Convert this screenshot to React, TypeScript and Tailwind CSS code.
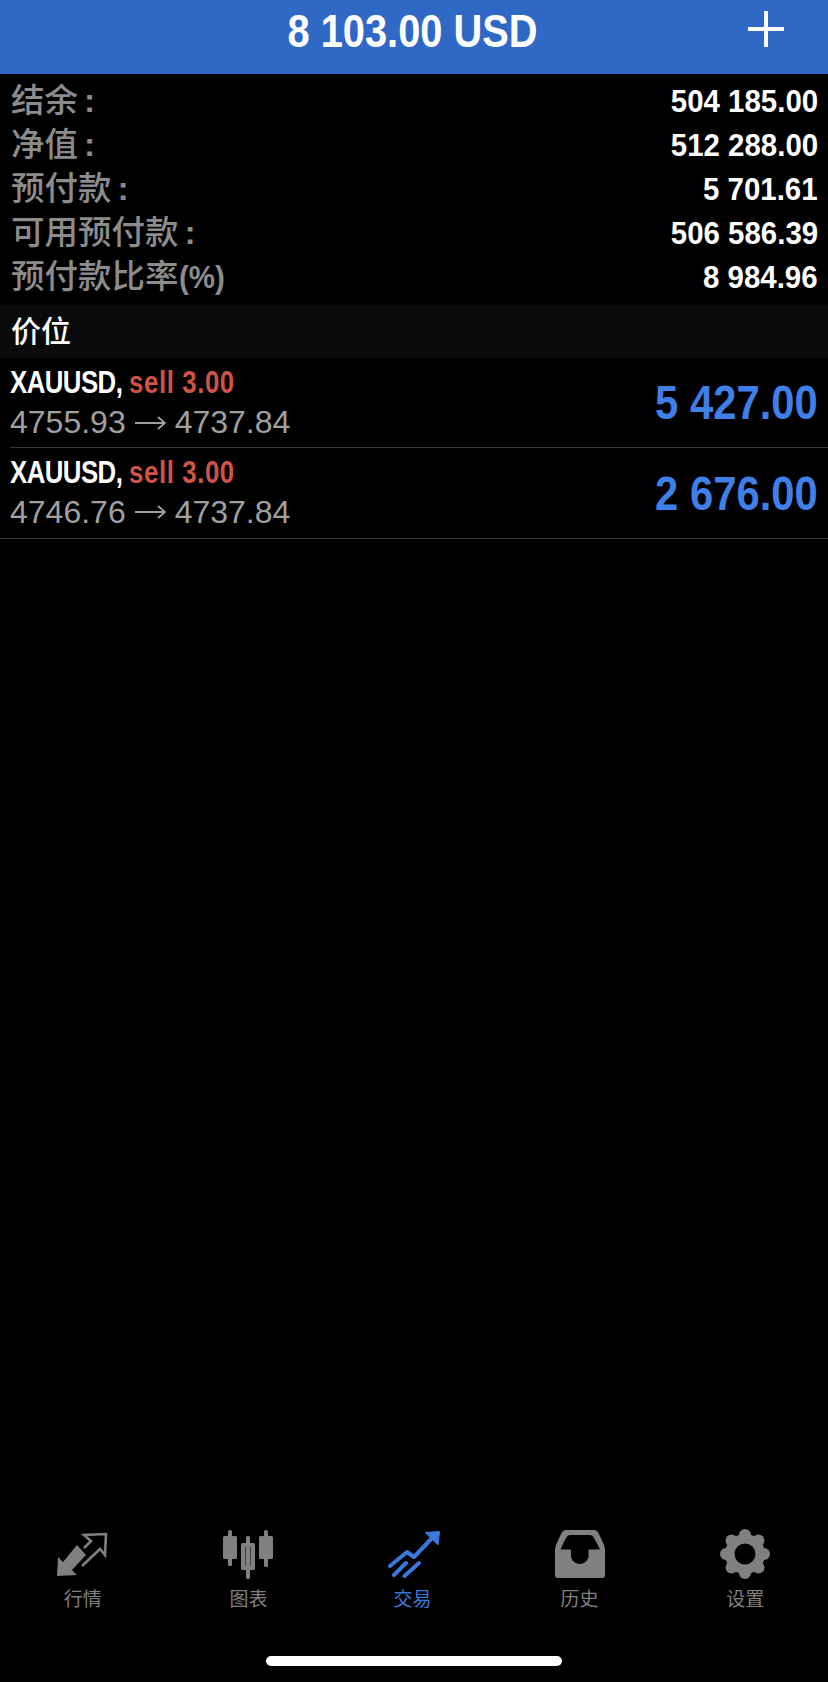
import type { ReactNode } from "react";

const sansStack = "font-['Liberation_Sans','Noto_Sans_CJK_SC',sans-serif]";

const summaryRows = [
  { label: "结余", suffix: ":", value: "504 185.00" },
  { label: "净值", suffix: ":", value: "512 288.00" },
  { label: "预付款", suffix: ":", value: "5 701.61" },
  { label: "可用预付款", suffix: ":", value: "506 586.39" },
  { label: "预付款比率", suffix: "(%)", value: "8 984.96" },
];

const positions = [
  { open: "4755.93", current: "4737.84", profit: "5 427.00", inset: true },
  { open: "4746.76", current: "4737.84", profit: "2 676.00", inset: false },
];

function QuotesIcon() {
  return (
    <svg width="51" height="46" viewBox="0 0 51 46" fill="none">
      <path d="M0 45 L1 26 L6 31 L20 14 L29 24 L15 39 L20 44 Z" fill="currentColor" />
      <path
        d="M25 35 L43 18 L48 24 L49 3 L27 4 L34 10 L27 17"
        stroke="currentColor"
        strokeWidth="2.6"
      />
    </svg>
  );
}

function ChartIcon() {
  return (
    <svg width="50" height="49" viewBox="0 0 50 49" fill="currentColor">
      <rect x="5" y="0" width="4" height="36" rx="1.5" />
      <rect x="0" y="6" width="14" height="23" rx="1.5" />
      <rect x="23" y="6" width="4" height="43" rx="1.5" />
      <path
        fillRule="evenodd"
        d="M19.5 13 H30.5 Q32 13 32 14.5 V38.5 Q32 40 30.5 40 H19.5 Q18 40 18 38.5 V14.5 Q18 13 19.5 13 Z M22.5 17 V36 H27.5 V17 Z"
      />
      <rect x="41" y="0" width="4" height="37" rx="1.5" />
      <rect x="36" y="6" width="14" height="23" rx="1.5" />
    </svg>
  );
}

function TradeIcon() {
  return (
    <svg width="52" height="47" viewBox="0 0 52 47" fill="none">
      <path
        d="M2 35 L19 21 L26 26 L46 5"
        stroke="currentColor"
        strokeWidth="4"
        strokeLinecap="round"
        strokeLinejoin="round"
      />
      <path d="M37 1.5 L51.5 0.5 L50 14 Z" fill="currentColor" stroke="currentColor" strokeLinejoin="round" />
      <path
        d="M6 44 L18 32 M16.5 45 L31 32"
        stroke="currentColor"
        strokeWidth="4"
        strokeLinecap="round"
      />
    </svg>
  );
}

function HistoryIcon() {
  return (
    <svg width="50" height="48" viewBox="0 0 50 48" fill="currentColor">
      <path
        fillRule="evenodd"
        d="M11 0 H39 Q42 0 43.5 3 L49 15 Q50 17 50 20 V45 Q50 48 47 48 H3 Q0 48 0 45 V20 Q0 17 1 15 L6.5 3 Q8 0 11 0 Z M5.5 19.5 H16 V27 A9 9 0 0 0 33.5 27 V19.5 H45 Q41 11 38 6.5 Q37 5 35 5 H15 Q13 5 12 6.5 Q9 11 5.5 19.5 Z"
      />
    </svg>
  );
}

function SettingsIcon() {
  const angles = [0, 45, 90, 135, 180, 225, 270, 315];
  return (
    <svg width="50" height="50" viewBox="0 0 50 50" fill="currentColor">
      <circle cx="25" cy="25" r="20" />
      {angles.map((angle) => (
        <circle
          key={angle}
          cx={25 + 19 * Math.sin((angle * Math.PI) / 180)}
          cy={25 - 19 * Math.cos((angle * Math.PI) / 180)}
          r="6"
        />
      ))}
      <circle cx="25" cy="25" r="10.5" fill="#000" />
    </svg>
  );
}

const tabs: { label: string; icon: ReactNode; active?: boolean }[] = [
  { label: "行情", icon: <QuotesIcon /> },
  { label: "图表", icon: <ChartIcon /> },
  { label: "交易", icon: <TradeIcon />, active: true },
  { label: "历史", icon: <HistoryIcon /> },
  { label: "设置", icon: <SettingsIcon /> },
];

export default function App() {
  return (
    <div className={`flex h-[1682px] flex-col bg-black ${sansStack}`}>
      {/* Header */}
      <header className="relative flex h-[74px] shrink-0 items-center justify-center bg-[#3068c6] pr-[4px] pb-[12px]">
        <span className="origin-center scale-x-[0.865] text-[46px] leading-none font-bold whitespace-nowrap text-white">
          8 103.00 USD
        </span>
        <svg
          className="absolute top-[11px] right-[44px] text-white"
          width="36"
          height="36"
          viewBox="0 0 36 36"
          stroke="currentColor"
          strokeWidth="4"
        >
          <path d="M0 18 H36 M18 0 V36" />
        </svg>
      </header>

      {/* Account summary */}
      <section className="shrink-0 pt-[5px] pb-[6px]">
        {summaryRows.map((row) => (
          <div key={row.label} className="flex h-[44px] items-center justify-between pr-[10px] pl-[11px]">
            <span className="text-[33.5px] leading-none font-medium text-[#8c8c8c]">
              {row.label}
              {row.suffix === ":" ? (
                <span className="ml-[6px] font-bold">:</span>
              ) : (
                <span className="inline-block origin-left scale-x-[0.95] text-[31px] font-bold">{row.suffix}</span>
              )}
            </span>
            <span className="origin-right scale-x-[0.92] text-[32px] leading-none font-bold whitespace-nowrap text-white">
              {row.value}
            </span>
          </div>
        ))}
      </section>

      {/* Positions */}
      <div className="flex h-[53px] shrink-0 items-center bg-[#0a0a0a] pl-[11px] text-[30px] font-medium text-white">
        价位
      </div>
      {positions.map((position) => (
        <div key={position.open} className={position.inset ? "pl-[10px]" : ""}>
          <div
            className={`flex items-center justify-between border-b border-[#3a3a3a] pr-[10px] ${
              position.inset ? "h-[90px]" : "h-[91px] pl-[10px]"
            }`}
          >
            <div className={`flex flex-col gap-[9px] ${position.inset ? "" : "pb-[2px]"}`}>
              <div className="origin-left scale-x-[0.806] text-[32px] leading-[31px] font-bold whitespace-nowrap">
                <span className="tracking-[-0.66px] text-white">XAUUSD, </span>
                <span className="tracking-[0.75px] text-[#cf5347]">sell 3.00</span>
              </div>
              <div className="flex items-center gap-[9px] text-[32px] leading-[31px] whitespace-nowrap text-[#a0a0a0]">
                <span>{position.open}</span>
                <svg
                  width="31"
                  height="16"
                  viewBox="0 0 31 16"
                  fill="none"
                  stroke="currentColor"
                  strokeWidth="1.8"
                >
                  <path d="M0 8 H30 M23 2 L30 8 L23 14" />
                </svg>
                <span>{position.current}</span>
              </div>
            </div>
            <span className="origin-right scale-x-[0.853] text-[49px] leading-none font-bold whitespace-nowrap text-[#3f7fe8]">
              {position.profit}
            </span>
          </div>
        </div>
      ))}

      {/* Tab bar */}
      <nav className="mt-auto grid h-[153px] shrink-0 grid-cols-5">
        {tabs.map((tab) => (
          <div
            key={tab.label}
            className={`flex flex-col items-center ${tab.active ? "text-[#3b78dc]" : "text-[#808080]"}`}
          >
            <div className="flex h-[50px] items-center justify-center">{tab.icon}</div>
            <span className={`mt-[9px] text-[19px] leading-[24px] ${tab.active ? "mr-[3px]" : ""}`}>{tab.label}</span>
          </div>
        ))}
      </nav>

      {/* Home indicator */}
      <div className="absolute top-[1656px] left-[266px] h-[10px] w-[296px] rounded-full bg-white" />
    </div>
  );
}
